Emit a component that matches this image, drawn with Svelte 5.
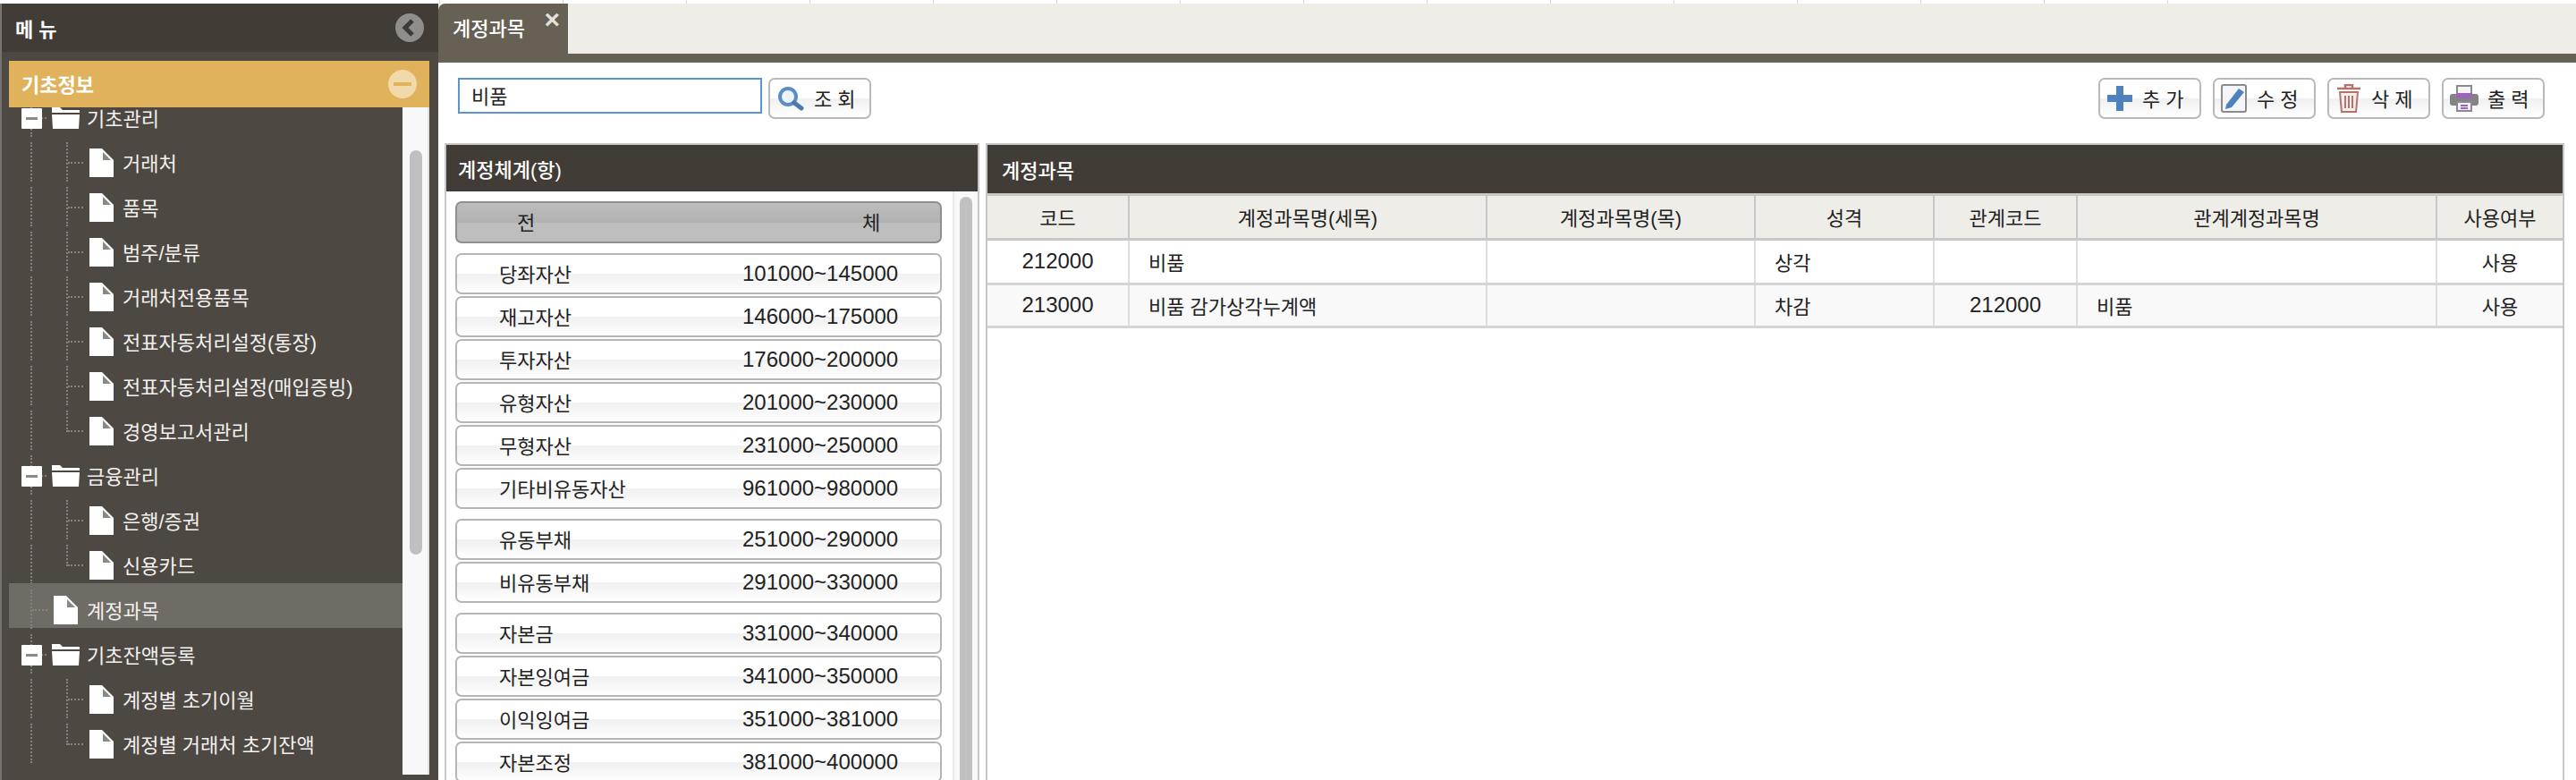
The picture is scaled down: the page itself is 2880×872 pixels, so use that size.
<script>
	const ticks = Array.from({ length: 15 });

	const tree = [
		{ label: '기초관리', type: 'folder' },
		{ label: '거래처', type: 'leaf' },
		{ label: '품목', type: 'leaf' },
		{ label: '범주/분류', type: 'leaf' },
		{ label: '거래처전용품목', type: 'leaf' },
		{ label: '전표자동처리설정(통장)', type: 'leaf' },
		{ label: '전표자동처리설정(매입증빙)', type: 'leaf' },
		{ label: '경영보고서관리', type: 'leaf', last: true },
		{ label: '금융관리', type: 'folder' },
		{ label: '은행/증권', type: 'leaf' },
		{ label: '신용카드', type: 'leaf', last: true },
		{ label: '계정과목', type: 'item', selected: true },
		{ label: '기초잔액등록', type: 'folder' },
		{ label: '계정별 초기이월', type: 'leaf' },
		{ label: '계정별 거래처 초기잔액', type: 'leaf', last: true }
	];

	const groups = [
		[
			['당좌자산', '101000~145000'],
			['재고자산', '146000~175000'],
			['투자자산', '176000~200000'],
			['유형자산', '201000~230000'],
			['무형자산', '231000~250000'],
			['기타비유동자산', '961000~980000']
		],
		[
			['유동부채', '251000~290000'],
			['비유동부채', '291000~330000']
		],
		[
			['자본금', '331000~340000'],
			['자본잉여금', '341000~350000'],
			['이익잉여금', '351000~381000'],
			['자본조정', '381000~400000']
		]
	];

	const columns = ['코드', '계정과목명(세목)', '계정과목명(목)', '성격', '관계코드', '관계계정과목명', '사용여부'];
	const widths = [158, 400, 300, 200, 160, 402, 141];

	const accounts = [
		{ code: '212000', name: '비품', sub: '', kind: '상각', rel: '', relName: '', use: '사용' },
		{ code: '213000', name: '비품 감가상각누계액', sub: '', kind: '차감', rel: '212000', relName: '비품', use: '사용' }
	];
</script>

<div class="page">
	<div class="ticks">
		{#each ticks as _}
			<span class="tick"></span>
		{/each}
	</div>

	<div class="main">
		<aside class="sidebar">
			<div class="side-head">
				<span>메 뉴</span>
				<svg class="round" width="32" height="32" viewBox="0 0 32 32">
					<circle cx="16" cy="16" r="16" fill="#8f8e8a" />
					<path d="M19 8 L11 16 L19 24" fill="none" stroke="#3f3a35" stroke-width="5" />
				</svg>
			</div>
			<div class="side-body">
				<div class="accordion">
					<span class="up">기초정보</span>
					<svg class="round" width="32" height="32" viewBox="0 0 32 32">
						<circle cx="16" cy="16" r="16" fill="#f1d9a9" />
						<rect x="6" y="14" width="20" height="4" fill="#e0b25c" />
					</svg>
				</div>
				<div class="tree-wrap">
					<div class="tree">
						{#each tree as row}
							<div class="row {row.type}" class:selected={row.selected}>
								<span class="guide-root"></span>
								{#if row.type === 'folder'}
									<span class="dash-folder"></span>
									<svg width="23" height="23" viewBox="0 0 23 23">
										<rect width="23" height="23" rx="1" fill="#fff" />
										<rect x="5" y="10" width="13" height="3" fill="#8d8a86" />
									</svg>
									<svg width="32" height="25" viewBox="0 0 32 25">
										<path d="M1 0 H10 L13 3 H32 V6 H1 Z" fill="#fff" />
										<path d="M1 8 H32 L31 24 H2 Z" fill="#fff" />
									</svg>
								{:else}
									{#if row.type === 'leaf'}
										<span class="guide-sub" class:last={row.last}></span>
									{/if}
									<span class="dash-file"></span>
									<svg width="27" height="32" viewBox="0 0 27 32">
										<path d="M0 0 H14 L27 13 V32 H0 Z" fill="#fff" />
										<path d="M15 4 L24 13 H15 Z" fill="#8b8884" />
									</svg>
								{/if}
								<span class="label up">{row.label}</span>
							</div>
						{/each}
					</div>
					<div class="track">
						<span class="thumb"></span>
					</div>
				</div>
			</div>
		</aside>

		<main class="content">
			<div class="tabbar">
				<div class="tab">
					계정과목
					<span class="close">×</span>
				</div>
			</div>

			<div class="toolbar">
				<input class="search" value="비품" />
				<button class="btn">
					<svg width="32" height="28" viewBox="0 0 32 28">
						<circle cx="13" cy="12" r="9" fill="#eef3f9" stroke="#5b8cc4" stroke-width="4" />
						<path d="M20 19 L28 25" stroke="#4d79ad" stroke-width="5" stroke-linecap="round" />
					</svg>
					<span class="up">조 회</span>
				</button>
				<div class="actions">
					<button class="btn">
						<svg width="30" height="30" viewBox="0 0 30 30">
							<path d="M11 1 H19 V11 H29 V19 H19 V29 H11 V19 H1 V11 H11 Z" fill="#4f81bd" />
						</svg>
						<span class="up">추 가</span>
					</button>
					<button class="btn">
						<svg width="30" height="32" viewBox="0 0 30 32">
							<rect x="1" y="1" width="27" height="30" rx="2" fill="#f3f5f8" stroke="#8b8b8b" stroke-width="2" />
							<path d="M6 23 L20 5 L26 9 L12 26 L5 28 Z" fill="#4f81bd" />
						</svg>
						<span class="up">수 정</span>
					</button>
					<button class="btn">
						<svg width="30" height="32" viewBox="0 0 30 32">
							<path d="M11 4 V1 H19 V4 M2 5 H28" fill="none" stroke="#b5736e" stroke-width="2.5" />
							<path d="M5 9 H25 L23 31 H7 Z" fill="#f8eeee" stroke="#b5736e" stroke-width="2" />
							<path d="M11 13 V27 M15 13 V27 M19 13 V27" stroke="#b5736e" stroke-width="2" />
						</svg>
						<span class="up">삭 제</span>
					</button>
					<button class="btn">
						<svg width="32" height="30" viewBox="0 0 32 30">
							<rect x="8" y="1" width="16" height="10" fill="#f4f4f4" stroke="#8b8b8b" stroke-width="2" />
							<rect x="0" y="10" width="32" height="13" rx="3" fill="#838383" />
							<rect x="7" y="9" width="18" height="6" fill="#9a67b8" />
							<rect x="8" y="19" width="16" height="10" fill="#f4f0f7" stroke="#8b8b8b" stroke-width="2" />
							<path d="M12 23 H20 M12 26 H20" stroke="#9a67b8" stroke-width="2" />
						</svg>
						<span class="up">출 력</span>
					</button>
				</div>
			</div>

			<div class="panels">
				<section class="panel left">
					<h2>계정체계(항)</h2>
					<div class="left-body">
						<div class="ranges">
							<div class="all">
								<span class="up">전</span>
								<span class="up">체</span>
							</div>
							{#each groups as group}
								<div class="group">
									{#each group as [name, range]}
										<div class="range">
											<span class="up">{name}</span>
											<span class="num">{range}</span>
										</div>
									{/each}
								</div>
							{/each}
						</div>
						<div class="track small">
							<span class="thumb"></span>
						</div>
					</div>
				</section>

				<section class="panel right">
					<h2>계정과목</h2>
					<table>
						<colgroup>
							{#each widths as w}
								<col style="width: {w}px" />
							{/each}
						</colgroup>
						<thead>
							<tr>
								{#each columns as col}
									<th>{col}</th>
								{/each}
							</tr>
						</thead>
						<tbody>
							{#each accounts as a}
								<tr>
									<td class="c num">{a.code}</td>
									<td>{a.name}</td>
									<td>{a.sub}</td>
									<td>{a.kind}</td>
									<td class="c num">{a.rel}</td>
									<td>{a.relName}</td>
									<td class="c">{a.use}</td>
								</tr>
							{/each}
						</tbody>
					</table>
				</section>
			</div>
		</main>
	</div>
</div>

<style>
	:global(body) {
		margin: 0;
		background: #fff;
	}

	.page {
		height: 872px;
		overflow: hidden;
		font-family: "Liberation Sans", "Noto Sans CJK KR", sans-serif;
		font-size: 22px;
		color: #222;
	}

	.up {
		padding-bottom: 3px;
	}

	.ticks {
		display: flex;
		height: 4px;
		padding-left: 491px;
	}

	.tick {
		width: 137px;
		border-left: 1px solid #d6d6de;
	}

	.main {
		display: flex;
		height: 868px;
	}

	/* sidebar */
	.sidebar {
		width: 490px;
		flex: none;
		display: flex;
		flex-direction: column;
		background: #4d4842;
		border-left: 2px solid #77736e;
		box-sizing: border-box;
		color: #fff;
	}

	.side-head {
		height: 54px;
		flex: none;
		display: flex;
		align-items: center;
		justify-content: space-between;
		padding: 0 16px 0 15px;
		background: #413c36;
		font-weight: 700;
	}

	.side-body {
		flex: 1;
		min-height: 0;
		display: flex;
		flex-direction: column;
		padding: 10px 10px 6px 8px;
	}

	.accordion {
		height: 52px;
		flex: none;
		display: flex;
		align-items: center;
		justify-content: space-between;
		padding: 0 14px;
		background: #e0b25c;
		font-weight: 700;
	}

	.tree-wrap {
		flex: 1;
		min-height: 0;
		display: flex;
		overflow: hidden;
	}

	.tree {
		flex: 1;
		margin-top: -13px;
	}

	.row {
		position: relative;
		height: 50px;
		display: flex;
		align-items: center;
		gap: 10px;
		color: #f2f1ef;
	}

	.row.folder {
		padding-left: 14px;
	}

	.row.item {
		padding-left: 50px;
	}

	.row.leaf {
		padding-left: 90px;
	}

	/* the highlight sits 5px above the row's own box */
	.row.selected {
		background: linear-gradient(#6f6b65 45px, transparent 45px);
		box-shadow: 0 -5px 0 #6f6b65;
	}

	.folder .label {
		margin-left: -2px;
	}

	.guide-root,
	.guide-sub,
	.dash-file,
	.dash-folder {
		position: absolute;
	}

	.guide-root {
		left: 24px;
		top: 2px;
		bottom: 4px;
		border-left: 2px dotted #85817c;
	}

	.guide-sub {
		left: 64px;
		top: 2px;
		bottom: 4px;
		border-left: 2px dotted #85817c;
	}

	.guide-sub.last {
		bottom: 24px;
	}

	.dash-file {
		top: 24px;
		width: 17px;
		border-top: 2px dotted #85817c;
	}

	.leaf .dash-file {
		left: 66px;
	}

	.item .dash-file {
		left: 26px;
	}

	.dash-folder {
		left: 36px;
		top: 24px;
		width: 6px;
		border-top: 2px dotted #85817c;
	}

	.row svg {
		position: relative;
		flex: none;
	}

	.track {
		width: 30px;
		flex: none;
		box-sizing: border-box;
		padding: 48px 6px 0 8px;
		background: #f8f8f8;
		border-right: 2px solid #e4e4e4;
	}

	.thumb {
		display: block;
		height: 452px;
		background: #c0c0c0;
		border-radius: 8px;
	}

	/* content */
	.content {
		flex: 1;
		min-width: 0;
		display: flex;
		flex-direction: column;
	}

	.tabbar {
		height: 56px;
		flex: none;
		background: #eeede8;
		border-bottom: 10px solid #676054;
	}

	.tab {
		position: relative;
		width: 145px;
		height: 56px;
		box-sizing: border-box;
		padding: 0 0 4px 16px;
		display: flex;
		align-items: center;
		background: #676054;
		border-top-left-radius: 8px;
		color: #fff;
		font-weight: 500;
	}

	.close {
		position: absolute;
		right: 9px;
		top: 0;
		font-size: 30px;
		line-height: 36px;
		font-weight: 700;
		color: #e4e2dc;
	}

	.toolbar {
		height: 90px;
		flex: none;
		box-sizing: border-box;
		display: flex;
		align-items: flex-start;
		gap: 7px;
		padding: 17px 35px 0 22px;
	}

	.search {
		width: 340px;
		height: 40px;
		box-sizing: border-box;
		margin: 0;
		padding: 0 13px 3px;
		border: 2px solid #5b94cf;
		outline: none;
		font: inherit;
		color: #222;
	}

	.btn {
		width: 115px;
		height: 46px;
		box-sizing: border-box;
		display: flex;
		align-items: center;
		gap: 10px;
		padding: 0 0 0 7px;
		border: 2px solid #b9b9b9;
		border-radius: 7px;
		background: linear-gradient(#fff 50%, #f0f0f0 50%, #fff);
		font: inherit;
		font-size: 22px;
		color: #222;
		white-space: nowrap;
	}

	.btn svg {
		flex: none;
	}

	.actions {
		margin-left: auto;
		display: flex;
		gap: 13px;
	}

	.panels {
		flex: 1;
		min-height: 0;
		display: flex;
		gap: 7px;
		padding: 0 13px 0 7px;
	}

	.panel {
		box-sizing: border-box;
		display: flex;
		flex-direction: column;
		border: 2px solid #c8c8c8;
		border-bottom: 0;
	}

	.panel h2 {
		margin: 0;
		height: 52px;
		flex: none;
		display: flex;
		align-items: center;
		background: #413c36;
		color: #fff;
		font-size: 22px;
		font-weight: 500;
	}

	.left {
		width: 598px;
		flex: none;
	}

	.left h2 {
		padding-left: 13px;
	}

	.right {
		flex: 1;
		min-width: 0;
	}

	.right h2 {
		height: 54px;
		padding-left: 16px;
	}

	.left-body {
		flex: 1;
		min-height: 0;
		display: flex;
		overflow: hidden;
	}

	.ranges {
		width: 544px;
		flex: none;
		margin: 11px 12px 0 10px;
	}

	.all {
		height: 47px;
		box-sizing: border-box;
		display: grid;
		grid-template-columns: 386px 1fr;
		align-items: center;
		padding-left: 67px;
		border: 2px solid #8f8f8f;
		border-radius: 7px;
		background: linear-gradient(#bdbdbd, #b1b1b1 50%, #bebebe 50%);
	}

	.group {
		margin-top: 11px;
		display: flex;
		flex-direction: column;
		gap: 2px;
	}

	.range {
		height: 46px;
		box-sizing: border-box;
		display: grid;
		grid-template-columns: 272px 1fr;
		align-items: center;
		padding-left: 47px;
		border: 2px solid #b5b5b5;
		border-radius: 7px;
		background: linear-gradient(#fff 50%, #f0f0f0 50%, #fff);
	}

	.num {
		font-size: 24px;
	}

	.track.small {
		padding: 6px 6px 0 6px;
		border-left: 2px solid #e8e8e8;
		border-right: 0;
		width: 28px;
	}

	.track.small .thumb {
		height: 700px;
	}

	table {
		width: 1761px;
		table-layout: fixed;
		border-collapse: collapse;
	}

	th {
		height: 45px;
		padding: 0 0 2px;
		background: #eeede8;
		border-right: 2px solid #c8c8c8;
		border-top: 3px solid #c8c8c8;
		border-bottom: 3px solid #c8c8c8;
		font-weight: 400;
	}

	th:last-child,
	td:last-child {
		border-right: 0;
	}

	td {
		height: 45px;
		padding: 0 0 2px 21px;
		border-right: 2px solid #dedede;
		border-bottom: 3px solid #d4d4d4;
	}

	tbody tr:nth-child(2) td {
		height: 43px;
		background: #f9f9f9;
	}

	td.c {
		padding: 0 0 2px;
		text-align: center;
	}
</style>
